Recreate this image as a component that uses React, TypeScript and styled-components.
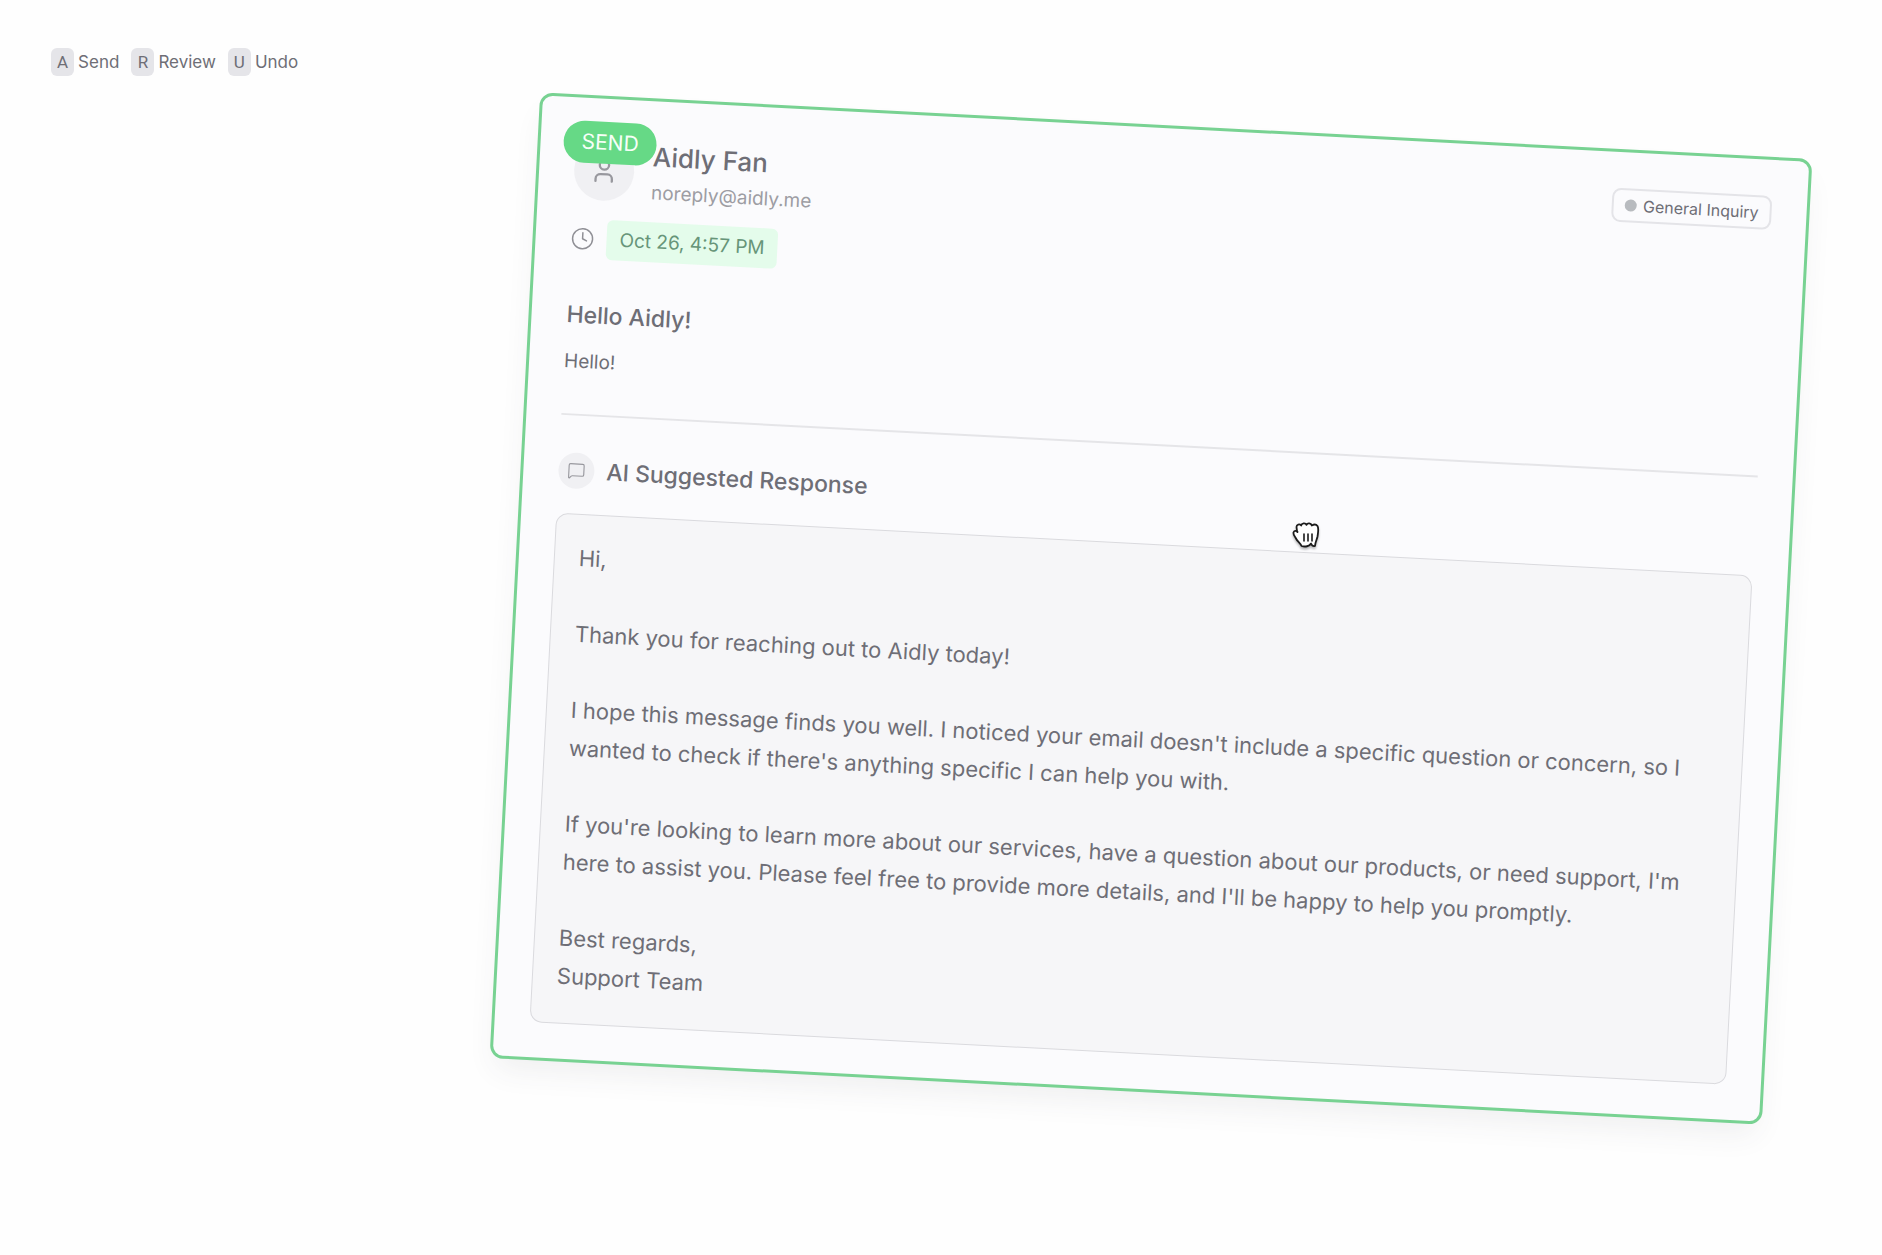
import React from "react";
import styled, { createGlobalStyle } from "styled-components";
import { Clock, MessageSquare, User } from "lucide-react";

const GlobalStyle = createGlobalStyle`
  *, *::before, *::after { box-sizing: border-box; }
  body {
    margin: 0;
    background: #fefefe;
    color: #6e6e76;
    font-family: Inter, "Liberation Sans", Arial, sans-serif;
  }
  h1, h2, p { margin: 0; font-weight: 400; }
`;

const Page = styled.div`
  position: relative;
  display: flex;
  flex-direction: column;
  gap: 49px;
  min-height: 100vh;
  padding: 48px 51px;
  overflow: hidden;
`;

const Shortcuts = styled.ul`
  display: flex;
  gap: 12px;
  margin: 0;
  padding: 0;
  list-style: none;
`;

const Shortcut = styled.li`
  display: flex;
  align-items: center;
  gap: 4px;
  font-size: 17px;
  line-height: 28px;
`;

const Key = styled.kbd`
  min-width: 23px;
  padding: 0 6px;
  border-radius: 6px;
  background: #e5e5e9;
  font-family: Roboto, sans-serif;
  font-size: 17px;
  line-height: 28px;
  text-align: center;
`;

const Stage = styled.main`
  display: flex;
  justify-content: center;
`;

const Card = styled.article<{ $drag: number; $tilt: number }>`
  position: relative;
  width: 100%;
  max-width: 1274px;
  padding: 36px 35px 35px;
  border: 3px solid #78d292;
  border-radius: 13px;
  background: #fbfbfd;
  box-shadow: 0 16px 30px -6px #3c3c5014;
  transform: translateX(${(p) => p.$drag}px) rotate(${(p) => p.$tilt}deg);
`;

const DecisionBadge = styled.span`
  position: absolute;
  top: 23px;
  left: 23px;
  padding: 0 18px;
  border-radius: 21px;
  background: #66d986;
  color: #f6fff8;
  font-size: 21px;
  line-height: 42px;
`;

const Header = styled.header`
  display: flex;
  align-items: flex-start;
  justify-content: space-between;
`;

const Sender = styled.div`
  display: flex;
  align-items: center;
  gap: 18px;
`;

const IconDisc = styled.span<{ $size: number }>`
  display: flex;
  align-items: center;
  justify-content: center;
  width: ${(p) => p.$size}px;
  height: ${(p) => p.$size}px;
  border-radius: 50%;
  background: #f0f0f3;
  color: #98989e;
`;

const SenderName = styled.h1`
  font-size: 26px;
  font-weight: 500;
  line-height: 39px;
`;

const SenderEmail = styled.p`
  color: #9d9da3;
  font-size: 19px;
  line-height: 33px;
`;

const Tag = styled.span`
  display: flex;
  align-items: center;
  gap: 6px;
  padding: 0 11px;
  border: 2px solid #e4e4e8;
  border-radius: 9px;
  font-size: 16px;
  line-height: 30px;
`;

const Dot = styled.span`
  width: 12px;
  height: 12px;
  border-radius: 50%;
  background: #b8bbbf;
`;

const Received = styled.div`
  display: flex;
  align-items: center;
  gap: 12px;
  margin-top: 13px;
  color: #909096;
`;

const ReceivedTime = styled.time`
  padding: 0 13px;
  border-radius: 6px;
  background: #e4fceb;
  color: #679579;
  font-size: 19px;
  line-height: 40px;
`;

const Subject = styled.h2`
  font-size: 23px;
  font-weight: 500;
  line-height: 36px;
`;

const Message = styled.section`
  display: grid;
  gap: 12px;
  margin-top: 38px;
  padding-bottom: 36px;
  border-bottom: 2px solid #e5e5e8;
`;

const MessageText = styled.p`
  font-size: 19px;
  line-height: 33px;
`;

const ResponseHeader = styled.div`
  display: flex;
  align-items: center;
  gap: 12px;
  margin: 37px 0 25px;
`;

const ResponseBody = styled.div`
  display: grid;
  gap: 38px;
  padding: 24px 36px 28px 24px;
  border: 1px solid #dadade;
  border-radius: 12px;
  background: #f6f6f8;
  font-size: 22px;
  line-height: 38px;
`;

const GrabCursor = styled.svg`
  position: absolute;
  top: 520px;
  left: 1291px;
  width: 30px;
  height: 30px;
  filter: drop-shadow(0 2px 1px #0004);
`;

const shortcuts = [
  { keyName: "A", label: "Send" },
  { keyName: "R", label: "Review" },
  { keyName: "U", label: "Undo" },
];

export default function App() {
  return (
    <Page>
      <GlobalStyle />
      <Shortcuts>
        {shortcuts.map((s) => (
          <Shortcut key={s.keyName}>
            <Key>{s.keyName}</Key>
            <span>{s.label}</span>
          </Shortcut>
        ))}
      </Shortcuts>
      <Stage>
        <Card $drag={210} $tilt={3}>
          <Header>
            <Sender>
              <IconDisc $size={60}>
                <User size={28} strokeWidth={2} />
              </IconDisc>
              <div>
                <SenderName>Aidly Fan</SenderName>
                <SenderEmail>noreply@aidly.me</SenderEmail>
              </div>
            </Sender>
            <Tag>
              <Dot />
              General Inquiry
            </Tag>
          </Header>
          <Received>
            <Clock size={24} strokeWidth={1.5} />
            <ReceivedTime>Oct 26, 4:57 PM</ReceivedTime>
          </Received>
          <Message>
            <Subject>Hello Aidly!</Subject>
            <MessageText>Hello!</MessageText>
          </Message>
          <ResponseHeader>
            <IconDisc $size={36}>
              <MessageSquare size={18} strokeWidth={1.5} />
            </IconDisc>
            <Subject>AI Suggested Response</Subject>
          </ResponseHeader>
          <ResponseBody>
            <p>Hi,</p>
            <p>Thank you for reaching out to Aidly today!</p>
            <p>
              I hope this message finds you well. I noticed your email doesn't include a specific
              question or concern, so I wanted to check if there's anything specific I can help you
              with.
            </p>
            <p>
              If you're looking to learn more about our services, have a question about our products,
              or need support, I'm here to assist you. Please feel free to provide more details, and
              I'll be happy to help you promptly.
            </p>
            <p>
              Best regards,
              <br />
              Support Team
            </p>
          </ResponseBody>
          <DecisionBadge>SEND</DecisionBadge>
        </Card>
      </Stage>
      <GrabCursor viewBox="0 0 30 30" aria-hidden="true">
        <path
          d="M6 11L5.500 7C5.500 4.500 8.500 3.500 10.200 5.500C10.500 3 14.500 2.500 15.500 4.800C16.500 2.800 20 3 20.800 5.500C22.500 4.500 25 4 26.500 6C28 8.500 27 13 26.500 16.500C26 19.500 24.500 21 24 26C22.500 26.500 21 26 20 23.500C18.500 26.500 14 27 10.500 26C9 22.500 6.500 21.500 5 18.500C4 16.500 2 15 2.500 12.500C3 10.500 5 10.500 6.500 12Z"
          fill="#fff"
          stroke="#1c1c1c"
          strokeWidth="1.800"
          strokeLinejoin="round"
        />
        <path
          d="M13 14v7M17 14v7M21 14v7"
          stroke="#1c1c1c"
          strokeWidth="1.600"
          strokeLinecap="round"
        />
      </GrabCursor>
    </Page>
  );
}
